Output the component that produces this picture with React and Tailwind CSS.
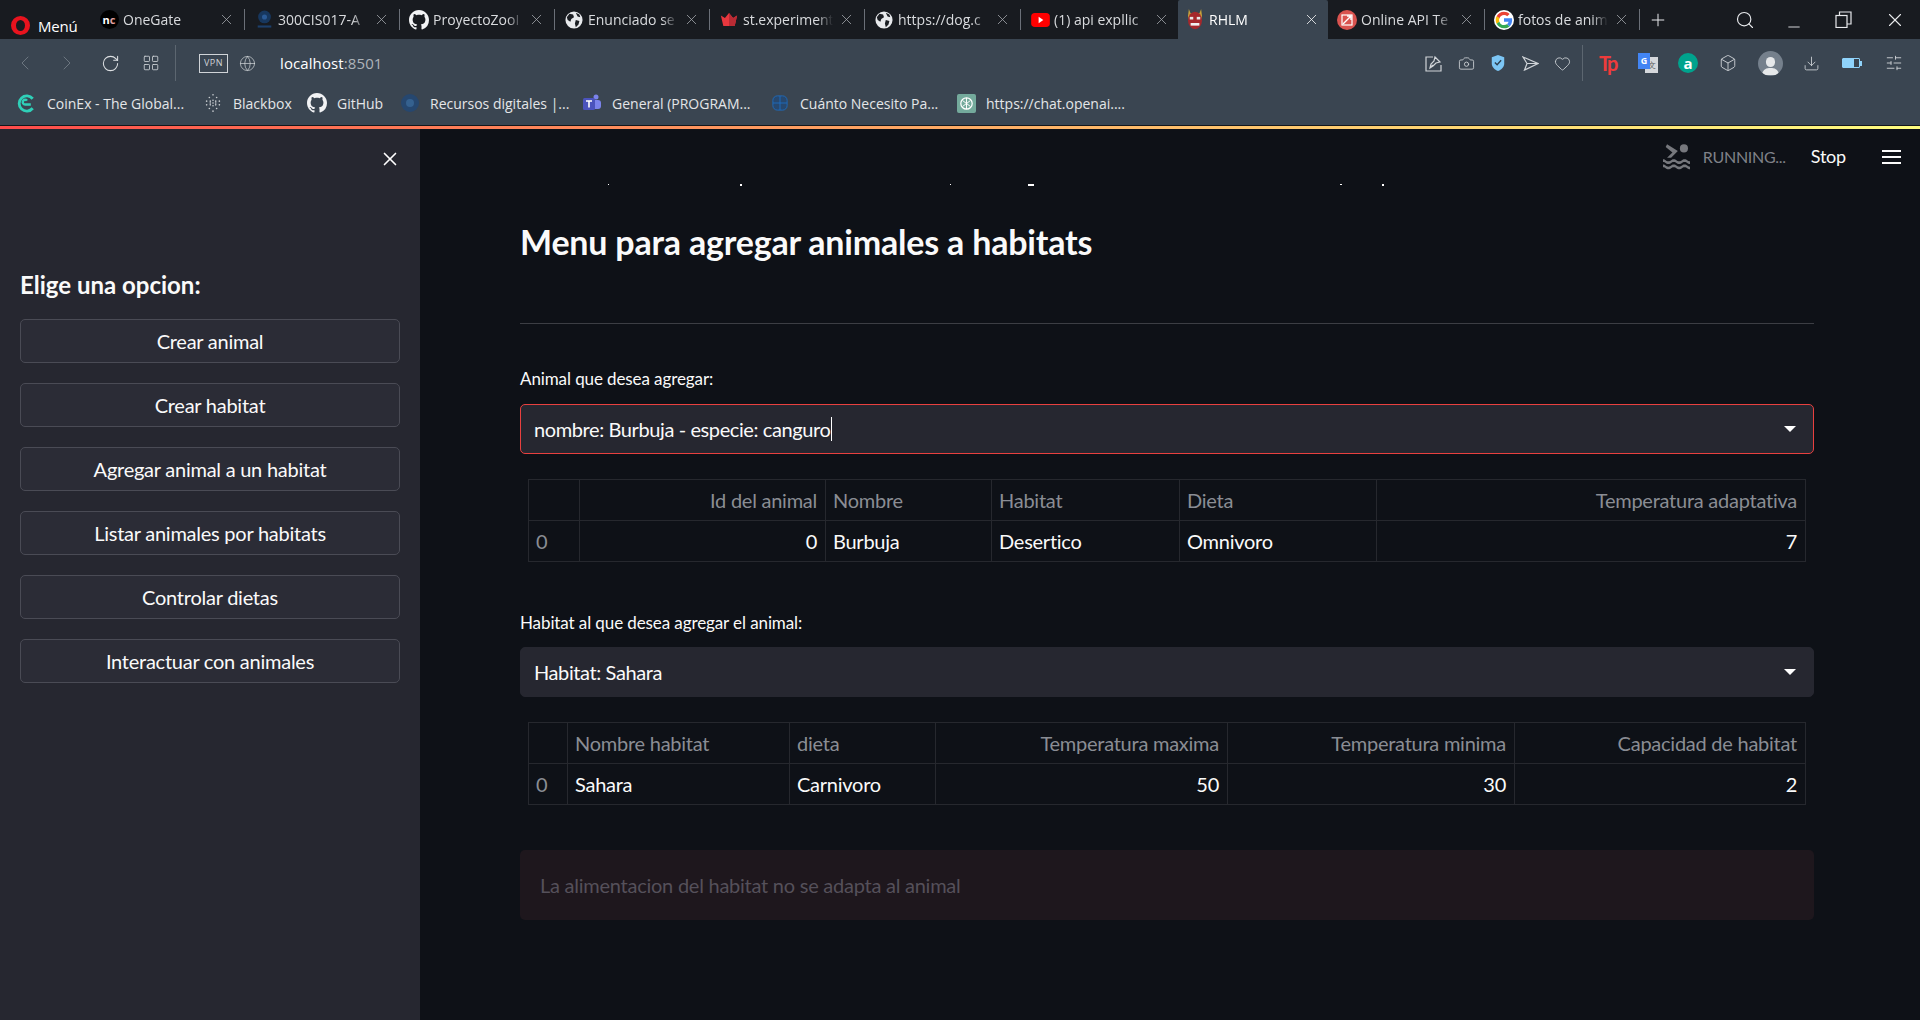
import React from 'react';
import { ChevronLeft, ChevronRight, RotateCw, LayoutGrid, Globe, X, Plus, Search, Minus, Camera, Heart, Download, Box, SlidersHorizontal } from 'lucide-react';

const ui = { fontFamily: '"Lato","Noto Sans",sans-serif' };
const chromeFont = { fontFamily: '"Open Sans","Noto Sans",sans-serif' };

const GlobeIcon = () => (
  <svg width="18" height="18" viewBox="0 0 20 20"><circle cx="10" cy="10" r="9.5" fill="#e8eaed"/><path d="M5 3l4 1 1 3-3 2-1 3-3-2-1-3zM12 10l4 1-1 4-3 3-1-4zM12 2l4 2 1 3-3-1z" fill="#1b1e23"/></svg>
);
const GitIcon = ({ s = 20 }) => (
  <svg width={s} height={s} viewBox="0 0 16 16" fill="#f2f3f5"><path d="M8 0C3.58 0 0 3.58 0 8c0 3.54 2.29 6.53 5.47 7.59.4.07.55-.17.55-.38 0-.19-.01-.82-.01-1.49-2.01.37-2.53-.49-2.69-.94-.09-.23-.48-.94-.82-1.13-.28-.15-.68-.52-.01-.53.63-.01 1.08.58 1.23.82.72 1.21 1.87.87 2.33.66.07-.52.28-.87.51-1.07-1.78-.2-3.64-.89-3.64-3.95 0-.87.31-1.59.82-2.15-.08-.2-.36-1.02.08-2.12 0 0 .67-.21 2.2.82.64-.18 1.32-.27 2-.27s1.36.09 2 .27c1.53-1.04 2.2-.82 2.2-.82.44 1.1.16 1.92.08 2.12.51.56.82 1.27.82 2.15 0 3.07-1.87 3.75-3.65 3.95.29.25.54.73.54 1.48 0 1.07-.01 1.93-.01 2.2 0 .21.15.46.55.38A8.01 8.01 0 0016 8c0-4.42-3.58-8-8-8z"/></svg>
);
const NC = () => (
  <div className="w-[19px] h-[19px] rounded-full bg-black flex items-center justify-center text-[11px] font-bold leading-none text-white">n<span className="text-[#e0a0a0]">c</span></div>
);
const Seal = () => (
  <svg width="17" height="19" viewBox="0 0 20 22"><circle cx="10" cy="8" r="7.500" fill="#17375e"/><circle cx="10" cy="8" r="3" fill="#2a5a96"/><rect x="2" y="18" width="16" height="2.500" fill="#1c3f6b"/></svg>
);
const Crown = () => (
  <svg width="18" height="13" viewBox="0 0 20 16"><path d="M0 3l5 3 5-6 5 6 5-3-3 13H3z" fill="#e8373e"/><path d="M10 0l5 6 5-3-3 13h-7z" fill="#b92b34"/></svg>
);
const YT = () => (
  <svg width="19" height="14" viewBox="0 0 20 15"><rect width="20" height="15" rx="4" fill="#f00"/><path d="M8 4l5 3.500L8 11z" fill="#fff"/></svg>
);
const Demon = () => (
  <svg width="20" height="21" viewBox="0 0 20 24"><path d="M3 0l2 5h10l2-5 1 8-1 4H3L2 8z" fill="#c9a13a"/><ellipse cx="10" cy="13" rx="8" ry="10" fill="#a5282c"/><rect x="4" y="9" width="4" height="3" fill="#e8e8e8"/><rect x="12" y="9" width="4" height="3" fill="#e8e8e8"/><rect x="5" y="16" width="10" height="3" fill="#f0f0f0"/></svg>
);
const ApiI = () => (
  <svg width="20" height="20" viewBox="0 0 20 20"><circle cx="10" cy="10" r="10" fill="#d9534f"/><rect x="5" y="5" width="10" height="10" fill="none" stroke="#fff" strokeWidth="1.200"/><path d="M6 14L14 6M10 6h4v4" stroke="#fff" strokeWidth="1.400" fill="none"/></svg>
);
const GIcon = () => (
  <svg width="20" height="20" viewBox="0 0 48 48"><circle cx="24" cy="24" r="24" fill="#fff"/><path fill="#EA4335" d="M24 12c3 0 5.600 1 7.700 3l5.700-5.700C33.900 6 29.300 4 24 4 16.200 4 9.500 8.500 6.200 15l6.700 5.200C14.500 15.400 18.900 12 24 12z"/><path fill="#4285F4" d="M43.500 24.500c0-1.600-.1-2.800-.4-4.500H24v8h11c-.5 2.600-2 4.800-4.200 6.300l6.500 5C41.100 35.800 43.500 30.700 43.500 24.500z"/><path fill="#FBBC05" d="M12.900 28.800c-.5-1.400-.7-3-.7-4.800s.3-3.300.7-4.800L6.200 15C4.800 17.800 4 20.800 4 24s.8 6.200 2.200 9z"/><path fill="#34A853" d="M24 44c5.300 0 9.900-1.800 13.300-4.700l-6.500-5c-1.800 1.200-4.100 1.900-6.800 1.900-5.100 0-9.500-3.400-11.100-8.300L6.200 33C9.500 39.500 16.200 44 24 44z"/></svg>
);

const tabs = [
  { w: 'w-[155px]', icon: <NC />, t: 'OneGate', sep: true },
  { w: 'w-[155px]', icon: <Seal />, t: '300CIS017-A', sep: true },
  { w: 'w-[155px]', icon: <GitIcon />, t: 'ProyectoZooI', sep: true },
  { w: 'w-[155px]', icon: <GlobeIcon />, t: 'Enunciado se', sep: true },
  { w: 'w-[155px]', icon: <Crown />, t: 'st.experiment', sep: true },
  { w: 'w-[156px]', icon: <GlobeIcon />, t: 'https://dog.c', sep: true },
  { w: 'w-[157px]', icon: <YT />, t: '(1) api expllic', sep: false },
  { w: 'w-[150px]', icon: <Demon />, t: 'RHLM', active: true },
  { w: 'w-[157px]', icon: <ApiI />, t: 'Online API Te', sep: true },
  { w: 'w-[155px]', icon: <GIcon />, t: 'fotos de anim', sep: true },
];

function Tab({ tab }) {
  return (
    <div className={`${tab.w} h-[39px] flex items-center shrink-0 ${tab.sep ? '' : 'pr-[8px]'} ${tab.active ? 'pl-[6px] bg-[#3a4551] rounded-t-[2px]' : 'pl-[8px]'}`}>
      <div className="w-[22px] flex justify-center shrink-0">{tab.icon}</div>
      <span className={`ml-[3px] flex-1 overflow-hidden whitespace-nowrap text-[14px] [mask-image:linear-gradient(to_left,transparent,black_16px)] ${tab.active ? 'text-white' : 'text-[#d9dbde]'}`}>{tab.t}</span>
      <X size={17} strokeWidth={1.100} className={`ml-[5px] shrink-0 ${tab.active ? 'text-white' : 'text-[#a8abb0]'}`} />
      {tab.sep && <div className="w-px h-[21px] bg-[#6b7078] ml-[9px] shrink-0" />}
    </div>
  );
}

const bookmarks = [
  { w: 'w-[186px]', icon: <svg width="20" height="19" viewBox="0 0 20 20" fill="none"><path d="M16 5a8 8 0 100 10" stroke="#2fd0b8" strokeWidth="3"/><path d="M14 11H8a2.500 2.500 0 112-4" stroke="#2fd0b8" strokeWidth="2.500"/></svg>, t: 'CoinEx - The Global...' },
  { w: 'w-[104px]', icon: <svg width="20" height="20" viewBox="0 0 20 22" fill="#c8ccd0">{[[10,2],[6,5],[14,5],[3,9],[7,9],[10,8],[13,9],[17,9],[3,13],[7,13],[10,14],[13,13],[17,13],[6,17],[14,17],[10,20],[10,11],[7,11],[13,11]].map(([x,y],i)=><circle key={i} cx={x} cy={y} r="0.9"/>)}</svg>, t: 'Blackbox' },
  { w: 'w-[93px]', icon: <GitIcon />, t: 'GitHub' },
  { w: 'w-[182px]', icon: <svg width="20" height="20" viewBox="0 0 20 20"><circle cx="10" cy="10" r="9" fill="#26476f"/><circle cx="10" cy="10" r="4" fill="#35618f"/></svg>, t: 'Recursos digitales |...' },
  { w: 'w-[188px]', icon: <svg width="20" height="20" viewBox="0 0 20 20"><circle cx="14" cy="4" r="2.500" fill="#7b83eb"/><rect x="10" y="7" width="9" height="9" rx="3" fill="#7b83eb"/><rect x="1" y="5" width="12" height="12" rx="1.500" fill="#4b53bc"/><path d="M4 8h6M7 8v6.500" stroke="#fff" strokeWidth="1.600"/></svg>, t: 'General (PROGRAM...' },
  { w: 'w-[186px]', icon: <svg width="16" height="16" viewBox="0 0 18 18" fill="none"><rect x="1" y="1" width="16" height="16" rx="5" fill="#27486f" stroke="#1d6cc0"/><path d="M1 9h16M9 1v16" stroke="#1d6cc0"/></svg>, t: 'Cuánto Necesito Pa...' },
  { w: 'w-[180px]', icon: <svg width="19" height="19" viewBox="0 0 20 20"><rect width="20" height="20" rx="2" fill="#74aa9c"/><circle cx="10" cy="10" r="6" fill="none" stroke="#fff" strokeWidth="1.300"/><path d="M6 7l8 6M14 7l-8 6M10 4v12" stroke="#fff" strokeWidth="1"/></svg>, t: 'https://chat.openai....' },
];

function ChromeBar() {
  return (
    <header style={chromeFont} className="h-[125px] bg-[#3a4551] flex flex-col">
      <div className="h-[39px] bg-[#181b20] flex items-stretch">
        <div className="w-[90px] shrink-0 flex items-center pl-[11px] pt-[12px]">
          <div className="w-[19px] h-[19px] rounded-full border-[4px] border-x-[5px] border-[#e8131e]" />
          <span className="ml-[8px] mt-[1px] text-[15px] tracking-[-0.2px] text-white">Menú</span>
        </div>
        {tabs.map((t) => <Tab key={t.t} tab={t} />)}
        <div className="w-[40px] flex items-center pl-[8px]"><Plus size={20} strokeWidth={1.200} className="text-[#e8eaed]" /></div>
        <div className="flex-1 flex items-center justify-end text-[#e8eaed]">
          <Search size={20} strokeWidth={1.400} className="mr-[30px]" />
          <Minus size={18} strokeWidth={1.200} className="mr-[32px] mt-[14px]" />
          <svg width="17" height="17" viewBox="0 0 17 17" fill="none" stroke="#e8eaed" strokeWidth="1.200" className="mr-[32px]"><rect x="1" y="4.500" width="11" height="12"/><path d="M4.500 4.500V1h11.500v12h-4"/></svg>
          <X size={22} strokeWidth={1.200} className="mr-[14px]" />
        </div>
      </div>
      <div className="h-[47px] flex items-center text-[#aeb4ba] pt-[1px]">
        <ChevronLeft size={24} strokeWidth={1} className="ml-[13px] text-[#6c7680]" />
        <ChevronRight size={24} strokeWidth={1} className="ml-[18px] text-[#6c7680]" />
        <RotateCw size={19} strokeWidth={1.300} className="ml-[22px] text-[#dde0e3]" />
        <LayoutGrid size={18} strokeWidth={1.100} className="ml-[22px] text-[#d0d4d8]" />
        <div className="w-px h-[36px] bg-[#5c6670] ml-[15px]" />
        <div className="ml-[23px] w-[29px] h-[19px] border border-[#d0d4d8] flex items-center justify-center text-[9px] tracking-[0.5px] text-[#d0d4d8]">VPN</div>
        <Globe size={17} strokeWidth={1} className="ml-[11px] text-[#d0d4d8]" />
        <span className="ml-[24px] text-[15px] tracking-[0.1px] text-white">localhost<span className="text-[#aeb4ba]">:8501</span></span>
        <div className="flex-1 flex items-center justify-end text-[#d0d4d8]">
          <svg width="17" height="17" viewBox="0 0 17 17" fill="none" stroke="#d0d4d8" strokeWidth="1.200" className="mr-[16px]"><path d="M8 2H1v14h15V10"/><path d="M5 13l1-4 3-3 1-4 5 5-4 1-3 3zM5 13l3-3"/></svg>
          <Camera size={17} strokeWidth={1.200} className="mr-[16px]" />
          <svg width="14" height="16" viewBox="0 0 14 18" className="mr-[17px]"><path d="M7 0l7 2.500v7c0 4-3 7-7 8.500-4-1.500-7-4.500-7-8.500v-7z" fill="#7cc6f5"/><path d="M3.500 8.500l2.500 2.500 4.500-5" stroke="#2d4050" strokeWidth="1.600" fill="none"/></svg>
          <svg width="17" height="15" viewBox="0 0 17 15" fill="none" stroke="#d0d4d8" strokeWidth="1.200" className="mr-[15px]"><path d="M1 1l15 6.500L2.500 14 5 7.500zM5 7.500h11"/></svg>
          <Heart size={17} strokeWidth={1.200} className="mr-[11px]" />
          <div className="w-px h-[36px] bg-[#5c6670] mr-[16px]" />
          <span className="w-[19px] mr-[20px] text-[#ef3b3b] font-bold text-[20px] leading-none tracking-[-2px]" style={ui}>Tp</span>
          <div className="relative w-[20px] h-[20px] mr-[20px]">
            <div className="absolute left-[7px] top-[4px] w-[13px] h-[16px] bg-[#d5d8dc] text-[#555] text-[8px] text-center leading-[16px]">文</div>
            <div className="absolute left-0 top-0 w-[12px] h-[16px] bg-[#4285f4] text-white text-[9px] font-bold text-center leading-[16px]">G</div>
          </div>
          <div className="w-[20px] h-[20px] rounded-full bg-[#00a38d] text-white text-[15px] font-bold flex items-center justify-center mr-[21px]">a</div>
          <Box size={18} strokeWidth={1.200} className="mr-[21px]" />
          <div className="w-[25px] h-[25px] rounded-full bg-[#75808c] mr-[20px] flex flex-col items-center justify-end overflow-hidden">
            <div className="w-[9px] h-[10px] rounded-full bg-[#e6e8ea]" />
            <div className="w-[17px] h-[7px] rounded-t-full bg-[#e6e8ea] mt-[1px] mb-[1px]" />
          </div>
          <Download size={17} strokeWidth={1.200} className="mr-[22px]" />
          <div className="flex items-center mr-[23px]">
            <div className="w-[18px] h-[10px] rounded-[1px] border border-[#8fd3fb] flex"><div className="w-[11px] bg-[#8fd3fb]" /></div>
            <div className="w-[2px] h-[5px] bg-[#8fd3fb]" />
          </div>
          <SlidersHorizontal size={18} strokeWidth={1.200} className="mr-[17px]" />
        </div>
      </div>
      <div className="h-[36px] flex items-center pl-[17px] pb-[2px]">
        {bookmarks.map((b) => (
          <div key={b.t} className={`${b.w} shrink-0 flex items-center`}>
            <div className="w-[20px] flex justify-center shrink-0">{b.icon}</div>
            <span className="ml-[10px] whitespace-nowrap text-[14px] text-[#e4e6e8]">{b.t}</span>
          </div>
        ))}
      </div>
    </header>
  );
}

const buttons = ['Crear animal', 'Crear habitat', 'Agregar animal a un habitat', 'Listar animales por habitats', 'Controlar dietas', 'Interactuar con animales'];

function Sidebar() {
  return (
    <aside className="w-[420px] shrink-0 bg-[#262730] flex flex-col px-[20px]">
      <div className="h-[60px] flex items-center justify-end">
        <X size={22} strokeWidth={1.800} className="text-white mr-[-1px]" />
      </div>
      <h2 className="mt-[80px] text-[24px] leading-[32px] font-bold text-[#fafafa]">Elige una opcion:</h2>
      <div className="mt-[18px] flex flex-col gap-[20px]">
        {buttons.map((b) => (
          <button key={b} className="h-[44px] rounded-[5px] border border-[#4a4b55] bg-[#2b2c36] text-[20px] leading-[40px] text-[#fafafa] tracking-[-0.25px]">{b}</button>
        ))}
      </div>
    </aside>
  );
}

function Select({ text, focus, caret }) {
  return (
    <div className={`h-[50px] rounded-[5px] bg-[#262730] flex items-center pl-[13px] pr-[17px] border ${focus ? 'border-[#e8403f]' : 'border-[#262730]'}`}>
      <span className="flex-1 text-[20px] text-[#fafafa] tracking-[-0.4px] flex items-center">
        {text}
        {caret && <span className="inline-block w-px h-[24px] bg-white ml-[1px]" />}
      </span>
      <span className="w-0 h-0 border-l-[6px] border-r-[6px] border-t-[6px] border-l-transparent border-r-transparent border-t-white" />
    </div>
  );
}

function DataTable({ cols, row }) {
  return (
    <table className="mx-[8px] w-[1277px] table-fixed border-collapse text-[20px] tracking-[-0.25px]">
      <colgroup>{cols.map((c, i) => <col key={i} className={c.w} />)}</colgroup>
      <thead>
        <tr className="h-[41px]">
          {cols.map((c, i) => (
            <th key={i} className={`border border-[#26282e] font-normal text-[#8a8d94] ${c.right ? 'text-right pr-[8px]' : 'text-left pl-[7px]'}`}>{c.h}</th>
          ))}
        </tr>
      </thead>
      <tbody>
        <tr className="h-[41px]">
          {cols.map((c, i) => (
            <td key={i} className={`border border-[#26282e] ${i === 0 ? 'text-[#8a8d94]' : 'text-[#fafafa]'} ${c.right ? 'text-right pr-[8px]' : 'text-left pl-[7px]'}`}>{row[i]}</td>
          ))}
        </tr>
      </tbody>
    </table>
  );
}

const t1 = [
  { h: '', w: 'w-[51px]' }, { h: 'Id del animal', w: 'w-[246px]', right: true }, { h: 'Nombre', w: 'w-[166px]' },
  { h: 'Habitat', w: 'w-[188px]' }, { h: 'Dieta', w: 'w-[197px]' }, { h: 'Temperatura adaptativa', w: 'w-[429px]', right: true },
];
const t2 = [
  { h: '', w: 'w-[39px]' }, { h: 'Nombre habitat', w: 'w-[222px]' }, { h: 'dieta', w: 'w-[146px]' },
  { h: 'Temperatura maxima', w: 'w-[292px]', right: true }, { h: 'Temperatura minima', w: 'w-[287px]', right: true }, { h: 'Capacidad de habitat', w: 'w-[291px]', right: true },
];

function Main() {
  return (
    <main className="flex-1 bg-[#0e1117] flex flex-col pl-[100px] pr-[107px]">
      <div className="h-[55px] flex items-center justify-end mr-[-107px] pr-[20px]">
        <svg width="29" height="27" viewBox="2 1 20 20" fill="#76787d" className="mr-[12px]"><circle cx="17.500" cy="5" r="3"/><path d="M5 2l8 5-5 5h-3l4-4-5-4zM2 17c2 0 2 1.500 4 1.500S8 17 10 17s2 1.500 4 1.500 2-1.500 4-1.500 2 1.500 4 1.500v2c-2 0-2-1.500-4-1.500s-2 1.500-4 1.500-2-1.500-4-1.500-2 1.500-4 1.500S4 19 2 19zM2 13c2 0 2 1.500 4 1.500S8 13 10 13s2 1.500 4 1.500 2-1.500 4-1.500 2 1.500 4 1.500v2c-2 0-2-1.500-4-1.500s-2 1.500-4 1.500-2-1.500-4-1.500-2 1.500-4 1.500S4 15 2 15z"/></svg>
        <span className="text-[16px] text-[#7f8188] tracking-[-0.3px]">RUNNING...</span>
        <span className="ml-[25px] text-[18px] text-[#fafafa] tracking-[-0.2px]">Stop</span>
        <div className="ml-[36px] w-[19px] h-[14px] flex flex-col justify-between">
          <div className="h-[2px] bg-[#fafafa]" /><div className="h-[2px] bg-[#fafafa]" /><div className="h-[2px] bg-[#fafafa]" />
        </div>
      </div>
      <div className="h-[2px] flex items-start">
        <span className="ml-[88px] w-[1px] h-[1px] bg-white" />
        <span className="ml-[131px] w-[2px] h-[2px] bg-white" />
        <span className="ml-[208px] w-[1px] h-[1px] bg-white" />
        <span className="ml-[77px] w-[6px] h-[2px] bg-white" />
        <span className="ml-[306px] w-[2px] h-[1px] bg-white" />
        <span className="ml-[40px] w-[2px] h-[2px] bg-white" />
      </div>
      <h1 className="mt-[32px] text-[34px] leading-[48px] font-bold text-[#fafafa] tracking-[-0.2px]">Menu para agregar animales a habitats</h1>
      <div className="mt-[57px] h-px bg-[#3c3e44]" />
      <label className="mt-[43px] text-[17px] leading-[24px] text-[#fafafa] tracking-[-0.1px]">Animal que desea agregar:</label>
      <div className="mt-[13px]"><Select text="nombre: Burbuja - especie: canguro" focus caret /></div>
      <div className="mt-[25px]"><DataTable cols={t1} row={['0', '0', 'Burbuja', 'Desertico', 'Omnivoro', '7']} /></div>
      <label className="mt-[49px] text-[17px] leading-[24px] text-[#fafafa] tracking-[-0.1px]">Habitat al que desea agregar el animal:</label>
      <div className="mt-[12px]"><Select text="Habitat: Sahara" /></div>
      <div className="mt-[25px]"><DataTable cols={t2} row={['0', 'Sahara', 'Carnivoro', '50', '30', '2']} /></div>
      <div className="mt-[45px] h-[70px] rounded-[5px] bg-[#1e171d] flex items-center pl-[20px] text-[20px] text-[#55505a] tracking-[-0.25px]">La alimentacion del habitat no se adapta al animal</div>
    </main>
  );
}

export default function App() {
  return (
    <div className="h-[1020px] w-[1920px] overflow-hidden flex flex-col bg-[#0e1117]" style={ui}>
      <ChromeBar />
      <div className="h-px bg-[#14171b]" />
      <div className="h-[3px] bg-gradient-to-r from-[#ff4b4b] to-[#fffd80]" />
      <div className="flex-1 flex min-h-0">
        <Sidebar />
        <Main />
      </div>
    </div>
  );
}
